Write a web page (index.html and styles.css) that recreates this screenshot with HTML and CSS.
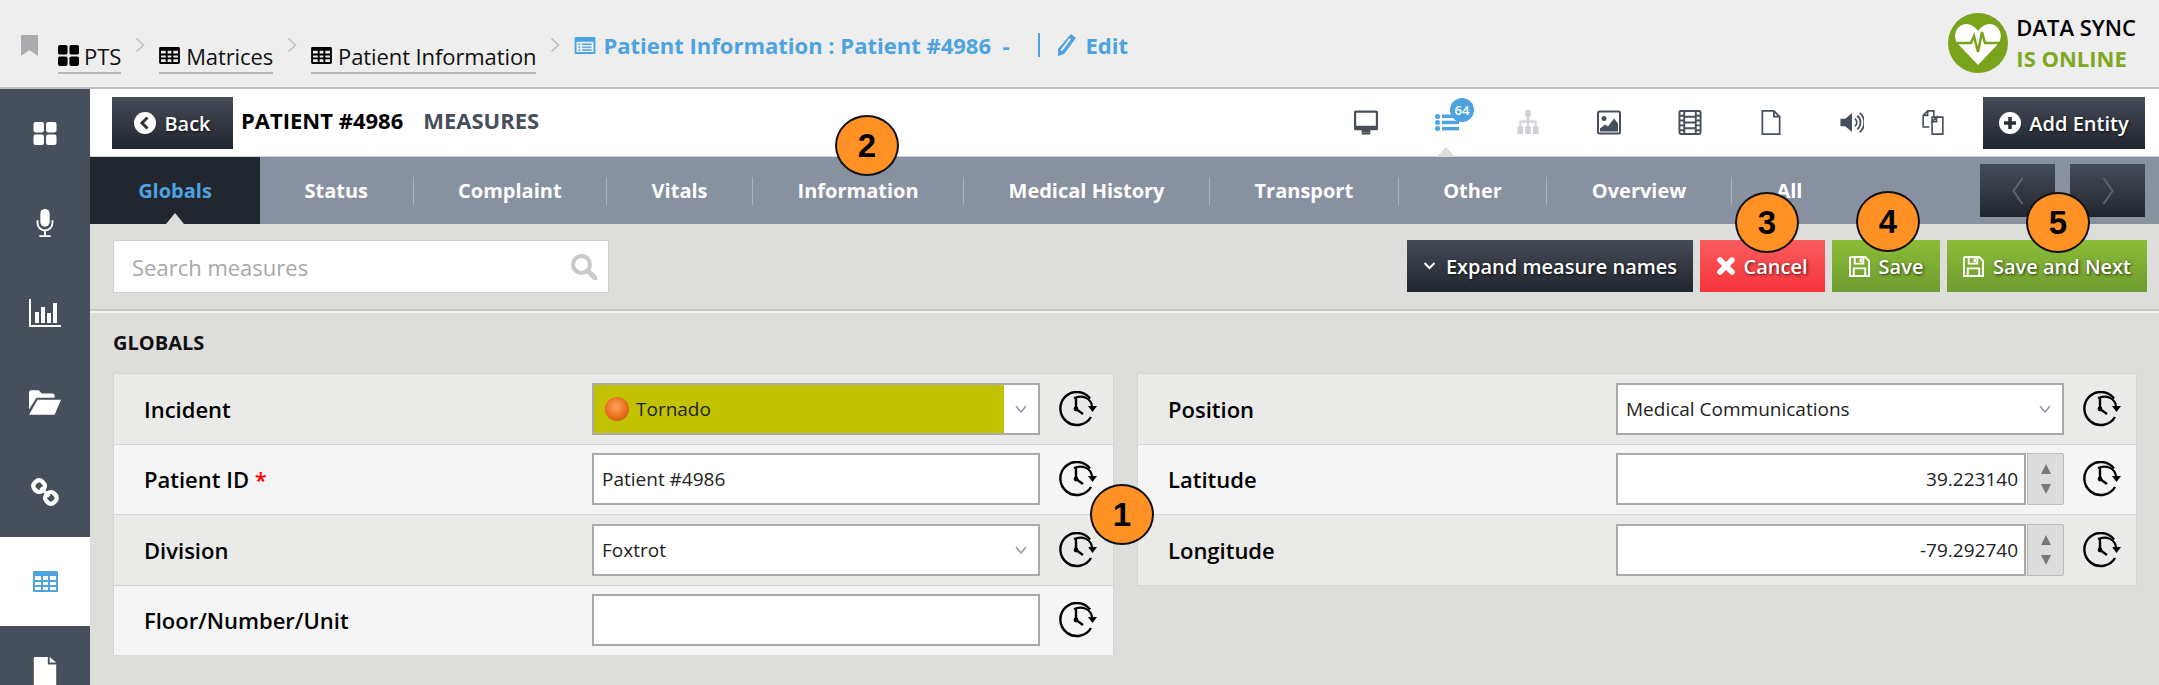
FILE: index.html
```html
<!DOCTYPE html>
<html lang="en">
<head>
<meta charset="utf-8">
<title>Patient Information</title>
<link rel="stylesheet" href="styles.css">
</head>
<body>
<svg class="defs" width="0" height="0" aria-hidden="true">
  <symbol id="clock" viewBox="0 0 39 36">
    <path d="M32 7.5A16.5 16.5 0 1 0 33 26" fill="none" stroke="#000" stroke-width="2.4"/>
    <path d="M16 7 C25 3 33 8 34 15" fill="none" stroke="#000" stroke-width="2.2"/>
    <path d="M30 15h9l-4.500 6z" fill="#000"/>
    <path d="M18 7v11l7 5" fill="none" stroke="#000" stroke-width="2.4"/>
    <circle cx="18" cy="18" r="2.4" fill="#000"/>
  </symbol>
  <symbol id="grid4" viewBox="0 0 22 22">
    <rect width="10" height="10" rx="2"/><rect x="12" width="10" height="10" rx="2"/><rect y="12" width="10" height="10" rx="2"/><rect x="12" y="12" width="10" height="10" rx="2"/>
  </symbol>
  <symbol id="table" viewBox="0 0 22 18">
    <path fill-rule="evenodd" d="M1.500 0h19A1.500 1.500 0 0 1 22 1.500v15a1.500 1.500 0 0 1-1.500 1.500h-19A1.500 1.500 0 0 1 0 16.500v-15A1.500 1.500 0 0 1 1.500 0zM2 4v3h5V4zm7 0v3h4V4zm6 0v3h5V4zM2 9v2h5V9zm7 0v2h4V9zm6 0v2h5V9zM2 13v3h5v-3zm7 0v3h4v-3zm6 0v3h5v-3z"/>
  </symbol>
  <symbol id="floppy" viewBox="0 0 22 22">
    <path fill="none" stroke="currentColor" stroke-width="2" d="M2 1h15l4 4v16H1V2z"/>
    <path fill="none" stroke="currentColor" stroke-width="2" d="M6 1v7h9V1M5 21v-8h12v8"/>
    <rect x="11" y="2.500" width="2.500" height="4" fill="currentColor"/>
  </symbol>
  <symbol id="chev" viewBox="0 0 10 16">
    <path d="M1.500 1.500 8.500 8l-7 6.500" fill="none" stroke="#bdbdbd" stroke-width="1.600"/>
  </symbol>
  <symbol id="caret" viewBox="0 0 12 8">
    <path d="M1 1l5 6 5-6" fill="none" stroke="#8f98a8" stroke-width="1.500"/>
  </symbol>
</svg>

<header class="topbar">
  <nav class="crumbs">
    <svg class="bookmark" viewBox="0 0 17 21"><path d="M0 0h17v21l-8.500-6L0 21z" fill="#a9abae"/></svg>
    <a class="crumb"><svg class="ci ci-sq"><use href="#grid4"/></svg>PTS</a>
    <svg class="sep"><use href="#chev"/></svg>
    <a class="crumb"><svg class="ci ci-tb"><use href="#table"/></svg>Matrices</a>
    <svg class="sep"><use href="#chev"/></svg>
    <a class="crumb"><svg class="ci ci-tb"><use href="#table"/></svg>Patient Information</a>
    <svg class="sep"><use href="#chev"/></svg>
    <span class="current">
      <svg class="ci-blue" viewBox="0 0 22 18"><path fill="#4da3e0" fill-rule="evenodd" d="M1 0h20a1 1 0 0 1 1 1v16a1 1 0 0 1-1 1H1a1 1 0 0 1-1-1V1a1 1 0 0 1 1-1zm1 5v11h18V5zm2 2h2v1.500H4zm4 0h10v1.500H8zm-4 3h2v1.500H4zm4 0h10v1.500H8zm-4 3h2v1.500H4zm4 0h10v1.500H8z"/></svg>
      <span class="current-text">Patient Information : Patient #4986&nbsp; -</span>
      <span class="pipe"></span>
      <svg class="pencil" viewBox="0 0 20 24"><path fill="#4da3e0" d="M14 1l5 4L7 21l-6 2 0-7zM12.500 5 3.500 17l1.500 1.200L14 6.200z"/></svg>
      <span class="current-text">Edit</span>
    </span>
  </nav>
  <div class="sync">
    <svg class="sync-logo" viewBox="0 0 60 60">
      <circle cx="30" cy="30" r="30" fill="#78a31b"/>
      <path d="M30 52 10 31C4 23 8 12 18 11c5 0 9 3 12 7 3-4 7-7 12-7 10 1 14 12 8 20z" fill="#fff"/>
      <path d="M9 30h14l3-7 4 16 4-20 3 11h14" fill="none" stroke="#78a31b" stroke-width="2.500"/>
    </svg>
    <div class="sync-text"><div class="sync-a">DATA SYNC</div><div class="sync-b">IS ONLINE</div></div>
  </div>
</header>

<div class="app">
  <aside class="side">
    <div class="side-item"><svg class="s-grid"><use href="#grid4"/></svg></div>
    <div class="side-item"><svg class="s-ico" viewBox="0 0 24 30"><path fill="#fff" d="M12 0a5 5 0 0 1 5 5v9a5 5 0 0 1-10 0V5a5 5 0 0 1 5-5z"/><path fill="none" stroke="#fff" stroke-width="2" d="M4 12v3a8 8 0 0 0 16 0v-3M12 23v5M6 29h12"/></svg></div>
    <div class="side-item"><svg class="s-ico" viewBox="0 0 32 28"><path fill="none" stroke="#fff" stroke-width="2" d="M1 0v27h31"/><path fill="#fff" d="M6 13h4v11H6zM12 8h4v16h-4zM18 14h4v10h-4zM24 4h4v20h-4z"/></svg></div>
    <div class="side-item"><svg class="s-ico" viewBox="0 0 30 24"><path fill="#fff" d="M0 3a2 2 0 0 1 2-2h7l3 3h10a2 2 0 0 1 2 2v2H7L0 19zM8 10h22l-6 14H0z"/></svg></div>
    <div class="side-item"><svg class="s-ico" viewBox="0 0 26 26"><g fill="none" stroke="#fff" stroke-width="4"><rect x="2.500" y="2.500" width="10" height="10" rx="4" transform="rotate(45 7.500 7.500)"/><rect x="13.500" y="13.500" width="10" height="10" rx="4" transform="rotate(45 18.500 18.500)"/></g><path stroke="#fff" stroke-width="3" d="M9 9l8 8"/></svg></div>
    <div class="side-item side-active"><svg class="s-tb" viewBox="0 0 25 21"><path fill="#4da3e0" fill-rule="evenodd" d="M1 0h23a1 1 0 0 1 1 1v19a1 1 0 0 1-1 1H1a1 1 0 0 1-1-1V1a1 1 0 0 1 1-1zm1 5v4h6V5zm8 0v4h5V5zm7 0v4h6V5zM2 11v3h6v-3zm8 0v3h5v-3zm7 0v3h6v-3zM2 16v3h6v-3zm8 0v3h5v-3zm7 0v3h6v-3z"/></svg></div>
    <div class="side-item"><svg class="s-ico" viewBox="0 0 24 30"><path fill="#fff" d="M0 1a1 1 0 0 1 1-1h14v8h9v22H0zM17 0l7 6h-7z"/></svg></div>
  </aside>

  <main class="main">
    <div class="head">
      <a class="btn btn-dark btn-back"><svg class="bi" viewBox="0 0 22 22"><circle cx="11" cy="11" r="11" fill="#fff"/><path d="M13.500 5.500 8 11l5.500 5.500" fill="none" stroke="#333" stroke-width="3"/></svg>Back</a>
      <h1 class="title">PATIENT #4986</h1>
      <span class="subtitle">MEASURES</span>
      <div class="views">
        <span class="view"><svg class="vi" viewBox="0 0 22 22"><path fill="#474f5c" d="M1.500 0h19A1.500 1.500 0 0 1 22 1.500V17a1 1 0 0 1-1 1h-6v2h-8v-2H1a1 1 0 0 1-1-1V1.500A1.500 1.500 0 0 1 1.500 0zM2 2v12h18V2z"/><rect x="7" y="20" width="8" height="2" fill="#474f5c"/></svg></span>
        <span class="view view-on"><svg class="vi" viewBox="0 0 24 18"><g fill="#4da3e0"><circle cx="2.500" cy="3" r="2.500"/><circle cx="2.500" cy="9" r="2.500"/><circle cx="2.500" cy="15" r="2.500"/><rect x="7" y="1" width="17" height="3.500"/><rect x="7" y="7.200" width="17" height="3.500"/><rect x="7" y="13.400" width="17" height="3.500"/></g></svg><b class="badge">64</b></span>
        <span class="view"><svg class="vi" viewBox="0 0 22 26"><g fill="#cfd1d4"><rect x="8" y="0" width="6" height="7" rx="1"/><rect x="0" y="17" width="6" height="8" rx="1"/><rect x="8" y="17" width="6" height="8" rx="1"/><rect x="16" y="17" width="6" height="8" rx="1"/><path d="M10 7h2v4h8v6h-2v-4h-6v4h-2v-4H4v4H2v-6h8z"/></g></svg></span>
        <span class="view"><svg class="vi" viewBox="0 0 24 24"><rect x="1" y="1" width="22" height="22" rx="1.500" fill="#fff" stroke="#474f5c" stroke-width="2"/><circle cx="7" cy="8" r="2.500" fill="#474f5c"/><path d="M3 21v-3l5-4 3 2 6-8 4 5v8z" fill="#474f5c"/></svg></span>
        <span class="view"><svg class="vi" viewBox="0 0 24 26"><rect x="1" y="1" width="22" height="24" rx="1.500" fill="none" stroke="#474f5c" stroke-width="2"/><path d="M6 1v24M18 1v24M6 13h12M1 6h5M1 11h5M1 16h5M1 21h5M18 6h5M18 11h5M18 16h5M18 21h5M6 7h12M6 19h12" stroke="#474f5c" stroke-width="2"/></svg></span>
        <span class="view"><svg class="vi" viewBox="0 0 20 26"><path fill="none" stroke="#474f5c" stroke-width="1.800" d="M1 1h12l6 6v18H1zM13 1v6h6"/></svg></span>
        <span class="view"><svg class="vi" viewBox="0 0 24 26"><path fill="#474f5c" d="M0 9h5l7-6v20l-7-6H0z"/><path fill="none" stroke="#474f5c" stroke-width="1.800" d="M15 9a5 5 0 0 1 0 8M17.500 6a9 9 0 0 1 0 14M20 3a13 13 0 0 1 0 20"/></svg></span>
        <span class="view"><svg class="vi" viewBox="0 0 24 28"><path fill="none" stroke="#474f5c" stroke-width="1.800" d="M13 8V1H6L1 6v13h7M1 6h5V1M11 8h12v19H11zM11 13l5-5v5z"/></svg></span>
      </div>
      <a class="btn btn-dark btn-add"><svg class="bi" viewBox="0 0 22 22"><circle cx="11" cy="11" r="11" fill="#fff"/><path d="M11 5v12M5 11h12" stroke="#2b2f38" stroke-width="3.500"/></svg>Add Entity</a>
    </div>

    <div class="tabs">
      <a class="tab tab-on">Globals</a>
      <a class="tab">Status</a>
      <a class="tab">Complaint</a>
      <a class="tab">Vitals</a>
      <a class="tab">Information</a>
      <a class="tab">Medical History</a>
      <a class="tab">Transport</a>
      <a class="tab">Other</a>
      <a class="tab">Overview</a>
      <a class="tab tab-last">All</a>
      <div class="pager">
        <a class="btn btn-dark btn-page"><svg class="pg" viewBox="0 0 12 28"><path d="M10.500 1 1.500 14l9 13" fill="none" stroke="#5d6470" stroke-width="2"/></svg></a>
        <a class="btn btn-dark btn-page"><svg class="pg" viewBox="0 0 12 28"><path d="M1.500 1l9 13-9 13" fill="none" stroke="#5d6470" stroke-width="2"/></svg></a>
      </div>
    </div>

    <div class="toolbar">
      <div class="search">
        <span class="search-ph">Search measures</span>
        <svg class="search-i" viewBox="0 0 26 26"><circle cx="10.500" cy="10.500" r="8.500" fill="none" stroke="#c9c9c9" stroke-width="4"/><path d="M16.500 16.500 24 24" stroke="#c9c9c9" stroke-width="5" stroke-linecap="round"/></svg>
      </div>
      <div class="actions">
        <a class="btn btn-dark btn-expand"><svg class="ex" viewBox="0 0 12 8"><path d="M1 1l5 5 5-5" fill="none" stroke="#fff" stroke-width="2"/></svg>Expand measure names</a>
        <a class="btn btn-red btn-cancel"><svg class="xi" viewBox="0 0 18 18"><path d="M3 3l12 12M15 3 3 15" stroke="#fff" stroke-width="5.500" stroke-linecap="round"/></svg>Cancel</a>
        <a class="btn btn-green btn-save"><svg class="fl"><use href="#floppy"/></svg>Save</a>
        <a class="btn btn-green btn-next"><svg class="fl"><use href="#floppy"/></svg>Save and Next</a>
      </div>
    </div>

    <section class="section">
      <h2 class="section-title">GLOBALS</h2>
      <div class="columns">
        <div class="col">
          <div class="row">
            <div class="label">Incident</div>
            <div class="field field-select field-yellow"><span class="value"><i class="ball"></i>Tornado</span><span class="arrow"><svg class="caret"><use href="#caret"/></svg></span></div>
            <svg class="hist"><use href="#clock"/></svg>
          </div>
          <div class="row">
            <div class="label">Patient ID <span class="req">*</span></div>
            <div class="field"><span class="value">Patient #4986</span></div>
            <svg class="hist"><use href="#clock"/></svg>
          </div>
          <div class="row">
            <div class="label">Division</div>
            <div class="field field-select"><span class="value">Foxtrot</span><span class="arrow"><svg class="caret"><use href="#caret"/></svg></span></div>
            <svg class="hist"><use href="#clock"/></svg>
          </div>
          <div class="row">
            <div class="label">Floor/Number/Unit</div>
            <div class="field"></div>
            <svg class="hist"><use href="#clock"/></svg>
          </div>
        </div>
        <div class="col">
          <div class="row">
            <div class="label">Position</div>
            <div class="field field-select"><span class="value">Medical Communications</span><span class="arrow"><svg class="caret"><use href="#caret"/></svg></span></div>
            <svg class="hist"><use href="#clock"/></svg>
          </div>
          <div class="row">
            <div class="label">Latitude</div>
            <div class="num"><div class="field field-num"><span class="value">39.223140</span></div><div class="spin"><i class="up"></i><i class="down"></i></div></div>
            <svg class="hist"><use href="#clock"/></svg>
          </div>
          <div class="row row-end">
            <div class="label">Longitude</div>
            <div class="num"><div class="field field-num"><span class="value">-79.292740</span></div><div class="spin"><i class="up"></i><i class="down"></i></div></div>
            <svg class="hist"><use href="#clock"/></svg>
          </div>
        </div>
      </div>
    </section>
  </main>
</div>

<span class="mark mark-1">1</span>
<span class="mark mark-2">2</span>
<span class="mark mark-3">3</span>
<span class="mark mark-4">4</span>
<span class="mark mark-5">5</span>
</body>
</html>
```

FILE: styles.css
```css
* { box-sizing: border-box; }
html, body { margin: 0; height: 100%; overflow: hidden; }
body { font-family: "Open Sans", "Noto Sans", sans-serif; background: #dddddb; color: #000; position: relative; }
.defs { position: absolute; }
a { display: inline-flex; }

.topbar { height: 89px; background: #eeeeee; border-bottom: 2px solid #c0c0c0; display: flex; align-items: flex-start; justify-content: space-between; }
.crumbs { display: flex; align-items: center; height: 58px; margin-top: 16px; padding-left: 21px; font-size: 22px; }
.bookmark { width: 17px; height: 21px; margin-right: 20px; }
.crumb { align-items: center; height: 45px; margin-top: 0; border-bottom: 2px solid #b8b8b8; color: #111; letter-spacing: -.1px; padding-top: 10px; line-height: 30px; align-self: flex-end; margin-bottom: 0; }
.ci { fill: #000; margin-right: 6px; flex: none; }
.ci-sq { width: 21px; height: 21px; margin-right: 5px; }
.ci-tb { width: 21px; height: 17px; margin-right: 6px; }
.sep { width: 10px; height: 16px; margin: 0 14px; flex: none; }
.current { display: flex; align-items: center; color: #4da3e0; font-weight: 700; }
.ci-blue { width: 22px; height: 17px; margin-right: 7px; }
.pipe { width: 2px; height: 24px; background: #4da3e0; margin: 0 17px 0 29px; }
.pencil { width: 20px; height: 24px; margin-right: 8px; }
.sync { display: flex; align-items: center; margin: 12px 23px 0 0; }
.sync-logo { width: 60px; height: 60px; margin-right: 8px; }
.sync-text { font-size: 22px; font-weight: 600; line-height: 31px; }
.sync-b { color: #7ea81f; font-weight: 700; }

.app { display: flex; height: 596px; }
.side { width: 90px; flex: none; background: #474f5c; display: flex; flex-direction: column; overflow: hidden; }
.side-item { flex: 0 0 89.500px; display: flex; align-items: center; justify-content: center; }
.side-active { background: #fff; }
.s-grid { width: 26px; height: 23px; fill: #fff; }
.s-ico { width: 32px; height: 28px; }
.s-tb { width: 25px; height: 21px; }

.main { flex: 1; min-width: 0; }
.btn { align-items: center; justify-content: center; height: 52px; color: #fff; font-size: 20px; font-weight: 600; text-shadow: 1px 1px 3px rgba(0,0,0,.7); white-space: nowrap; }
.btn-dark { background: linear-gradient(#454b58, #22262e); }
.btn-red { background: linear-gradient(#fa5c5e, #f5343b); }
.btn-green { background: linear-gradient(#8cbd38, #6e9c2f); }
.bi { width: 22px; height: 22px; margin-right: 8px; flex: none; }

.head { height: 68px; padding: 8px 14px 0 22px; background: #fff; border-bottom: 1px solid #d0d0d0; display: flex; align-items: flex-start; }
.btn-back { width: 121px; }
.title { margin: 8px 0 0 8px; font-size: 22px; line-height: 30px; font-weight: 700; }
.subtitle { margin: 8px 0 0 20px; font-size: 22px; line-height: 30px; font-weight: 700; color: #474f5c; }
.views { display: flex; margin-left: auto; margin-right: 10px; }
.view { position: relative; width: 81px; height: 60px; padding-top: 13px; display: flex; justify-content: center; }
.vi { width: 24px; height: 25px; }
.view-on::after { content: ""; position: absolute; left: 31px; bottom: 0; border: 9px solid transparent; border-top: 0; border-bottom: 10px solid #dddddb; }
.badge { position: absolute; left: 44px; top: 1px; width: 24px; height: 24px; border-radius: 50%; background: #4da3e0; color: #fff; font-size: 13px; line-height: 24px; font-weight: 600; text-align: center; }
.btn-add { width: 162px; }

.tabs { height: 67px; background: #8791a0; display: flex; align-items: center; position: relative; }
.tab { position: relative; height: 28px; padding: 0 44.500px; align-items: center; color: #fff; font-size: 20px; font-weight: 700; border-right: 1px solid #a9b1bd; white-space: nowrap; }
.tab-on { height: 67px; width: 170px; padding: 0; justify-content: center; background: #22262f; color: #4da3e0; border: 0; }
.tab-on::after { content: ""; position: absolute; left: 76px; bottom: 0; border: 9px solid transparent; border-top: 0; border-bottom: 11px solid #dddddb; }
.tab-last { border: 0; }
.pager { display: flex; gap: 15px; margin-left: auto; padding-right: 14px; }
.btn-page { width: 75px; height: 53px; }
.pg { width: 12px; height: 28px; }

.toolbar { display: flex; padding: 16px 12px 16px 23px; border-bottom: 2px solid #c8c8c6; box-shadow: 0 2px 0 #f2f2f1; }
.search { width: 496px; height: 53px; background: #fff; border: 1px solid #cfcfcf; display: flex; align-items: center; justify-content: space-between; padding: 0 11px 0 18px; }
.search-ph { font-size: 22px; color: #a8a8a8; }
.search-i { width: 26px; height: 26px; }
.actions { display: flex; gap: 7px; margin-left: auto; }
.btn-expand { width: 286px; }
.btn-cancel { width: 125px; }
.btn-save { width: 108px; }
.btn-next { width: 200px; }
.ex { width: 13px; height: 8px; margin-right: 10px; }
.xi { width: 18px; height: 18px; margin-right: 8px; }
.fl { width: 21px; height: 21px; margin-right: 9px; color: #fff; }

.section { padding: 0 22px 0 23px; }
.section-title { margin: 0; padding: 17px 0 15px; font-size: 20px; line-height: 30px; font-weight: 700; color: #111; }
.columns { display: grid; grid-template-columns: 1000.500px 1000px; column-gap: 23.500px; align-items: start; }
.row { height: 70.500px; display: flex; align-items: center; background: #eaeae8; border: 1px solid #d4d4d2; border-bottom: 0; }
.row:nth-child(even) { background: #f5f5f5; }
.row-end { height: 71.500px; border-bottom: 1px solid #d4d4d2; }
.label { width: 478px; flex: none; padding-left: 30px; font-size: 22px; line-height: 30px; font-weight: 600; }
.req { color: #f00; }
.field { width: 448px; height: 52px; flex: none; background: #fff; border: 2px solid #aaa; display: flex; align-items: center; font-size: 19px; color: #222; }
.field-yellow .value { background: #c2c200; }
.value { flex: 1; height: 100%; display: flex; align-items: center; padding-left: 8px; white-space: nowrap; }
.arrow { flex: none; width: 34px; display: flex; justify-content: center; }
.caret { width: 12px; height: 8px; }
.ball { width: 24px; height: 24px; margin: 1px 7px 0 3px; border-radius: 50%; background: radial-gradient(circle at 45% 40%, #fba45a, #e8681a 60%, #8b5a20 100%); }
.num { width: 448px; flex: none; display: flex; }
.field-num { width: 410px; }
.field-num .value { justify-content: flex-end; padding: 0 6px 0 0; }
.spin { width: 37px; height: 52px; margin-left: 1px; background: #dcdcdc; border: 1px solid #bbb; border-radius: 0 2px 2px 0; display: flex; flex-direction: column; align-items: center; justify-content: space-around; padding: 5px 0; }
.up { border: 5px solid transparent; border-top: 0; border-bottom: 10px solid #777; }
.down { border: 5px solid transparent; border-bottom: 0; border-top: 10px solid #777; }
.hist { width: 39px; height: 36px; margin-left: 18px; flex: none; }

.mark { position: absolute; width: 64px; height: 61px; border-radius: 50%; background: #ff9125; border: 2px solid #111; font-family: "Liberation Sans", sans-serif; font-weight: 700; font-size: 33px; line-height: 57px; text-align: center; color: #000; }
.mark-1 { left: 1090px; top: 484px; }
.mark-2 { left: 835px; top: 115px; }
.mark-3 { left: 1735px; top: 192px; }
.mark-4 { left: 1856px; top: 191px; }
.mark-5 { left: 2026px; top: 192px; }
```
